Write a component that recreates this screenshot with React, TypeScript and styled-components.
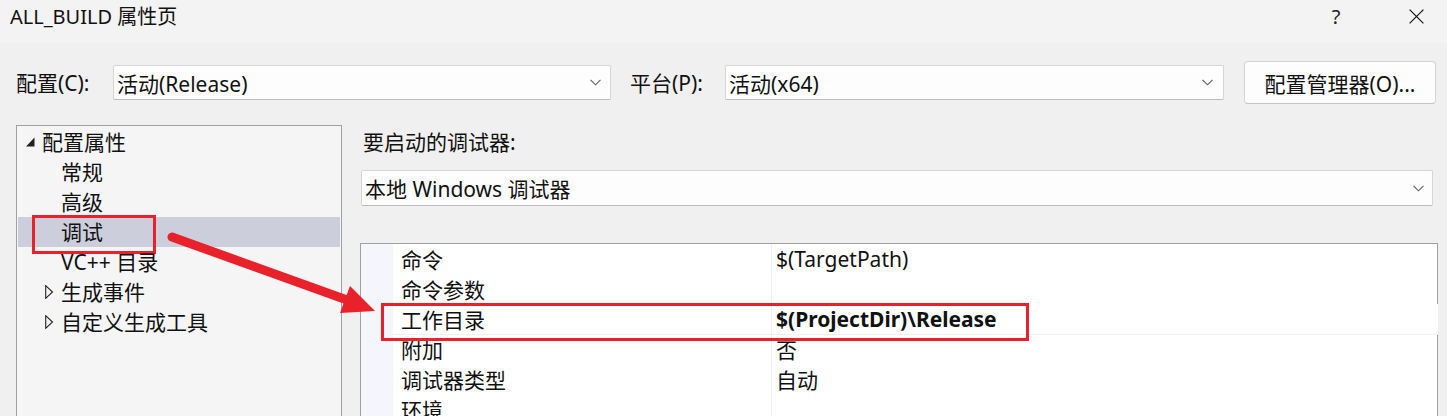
import React from "react";
import styled, { createGlobalStyle } from "styled-components";

const FONT = `"Noto Sans", "Noto Sans CJK SC", sans-serif`;
const RED = "#e8212b";

const GlobalStyle = createGlobalStyle`
  html, body { margin: 0; padding: 0; background: #f0f0f0; overflow: hidden; }
  body { font-family: ${FONT}; }
  * { box-sizing: border-box; }
`;

const Dialog = styled.div`
  position: relative;
  width: 1447px;
  height: 416px;
  overflow: hidden;
  background: #f0f0f0;
  font-family: ${FONT};
  font-size: 21px;
  color: #111;
`;

const TitleBar = styled.div`
  height: 42px;
  background: #f3f3f3;
  display: flex;
  align-items: flex-start;
  padding: 4px 23px 0 10px;
`;

const Title = styled.div`
  flex: 1;
  font-size: 20px;
  line-height: 26px;
`;

const HelpButton = styled.div`
  width: 20px;
  font-size: 20px;
  line-height: 26px;
  text-align: center;
  color: #222;
  margin-right: 63px;
`;

const CloseIcon = styled.svg`
  width: 15px;
  height: 15px;
  margin-top: 5px;
`;

const ConfigRow = styled.div`
  display: flex;
  align-items: center;
  height: 43px;
  margin-top: 19px;
  padding-left: 16px;
`;

const FieldLabel = styled.div<{ $w: number; $ml?: number }>`
  width: ${(p) => p.$w}px;
  margin-left: ${(p) => p.$ml ?? 0}px;
  line-height: 30px;
  white-space: nowrap;
`;

const Combo = styled.div<{ $w: number; $h?: number; $pr?: number }>`
  width: ${(p) => p.$w}px;
  height: ${(p) => p.$h ?? 35}px;
  background: #fdfdfd;
  border: 1px solid #d6d6d6;
  border-bottom-color: #bdbdbd;
  border-radius: 2px;
  display: flex;
  align-items: center;
  justify-content: space-between;
  padding: 0 ${(p) => p.$pr ?? 9}px 0 3px;
  white-space: nowrap;
`;

const Chevron = styled.svg`
  width: 11px;
  height: 7px;
  flex: none;
`;

const Button = styled.div`
  width: 192px;
  height: 43px;
  margin-left: 20px;
  background: #fdfdfd;
  border: 1px solid #d3d3d3;
  border-bottom-color: #c4c4c4;
  border-radius: 4px;
  display: flex;
  align-items: center;
  justify-content: center;
  white-space: nowrap;
`;

const Main = styled.div`
  display: flex;
  align-items: flex-start;
  margin-top: 21px;
  padding-left: 16px;
`;

const TreePanel = styled.div`
  width: 326px;
  height: 320px;
  flex: none;
  background: #f5f5f5;
  border: 1px solid #a0a0a0;
  padding: 1px 1px;
`;

const TreeRow = styled.div<{ $level: number; $selected?: boolean; $marked?: boolean }>`
  position: relative;
  height: 30px;
  display: flex;
  align-items: center;
  padding-left: ${(p) => 8 + p.$level * 19}px;
  background: ${(p) => (p.$selected ? "#cccedb" : "transparent")};
  white-space: nowrap;
  line-height: 28px;

  &::after {
    content: "";
    display: ${(p) => (p.$marked ? "block" : "none")};
    position: absolute;
    left: 14px;
    top: -2px;
    width: 118px;
    height: 33px;
    border: 3px solid ${RED};
  }
`;

const Expander = styled.span`
  width: 16px;
  height: 30px;
  flex: none;
  display: flex;
  align-items: center;
`;

const RightPane = styled.div`
  flex: 1;
  margin-left: 18px;
  padding-right: 9px;
`;

const SectionLabel = styled.div`
  line-height: 30px;
  margin-top: 2px;
  padding-left: 3px;
`;

const DebuggerCombo = styled(Combo)`
  margin: 13px 5px 0 1px;
  width: auto;
`;

const PropGrid = styled.div`
  margin-top: 37px;
  background: #fff;
  border: 1px solid #a0a0a0;
  border-bottom: none;
  height: 200px;
`;

const GridRow = styled.div<{ $marked?: boolean }>`
  position: relative;
  z-index: ${(p) => (p.$marked ? 1 : 0)};
  display: grid;
  grid-template-columns: 32px 379px 1fr;
  height: 30px;
  background: #fff;
  margin-right: ${(p) => (p.$marked ? -1 : 0)}px;

  &::after {
    content: "";
    display: ${(p) => (p.$marked ? "block" : "none")};
    position: absolute;
    left: 20px;
    top: -1px;
    width: 642px;
    height: 32px;
    border: 3px solid ${RED};
  }
`;

const Gutter = styled.div`
  background: #f4f6fb;
`;

const Cell = styled.div<{ $pl: number; $bold?: boolean; $divider?: boolean }>`
  display: flex;
  align-items: center;
  padding-left: ${(p) => p.$pl}px;
  border-bottom: 1px solid #eef0f6;
  border-right: ${(p) => (p.$divider ? "1px solid #eef0f6" : "none")};
  font-weight: ${(p) => (p.$bold ? 700 : 400)};
  white-space: nowrap;
`;

const ArrowLayer = styled.svg`
  position: absolute;
  left: 0;
  top: 0;
  width: 1447px;
  height: 416px;
  pointer-events: none;
  z-index: 2;
`;

const ChevronDown = () => (
  <Chevron viewBox="0 0 11 7">
    <polyline points="0.5,0.8 5.5,5.8 10.5,0.8" fill="none" stroke="#5f5f5f" strokeWidth="1.1" />
  </Chevron>
);

type TreeItem = { label: string; level: number; expander?: "open" | "closed"; selected?: boolean; marked?: boolean };

const tree: TreeItem[] = [
  { label: "配置属性", level: 0, expander: "open" },
  { label: "常规", level: 1 },
  { label: "高级", level: 1 },
  { label: "调试", level: 1, selected: true, marked: true },
  { label: "VC++ 目录", level: 1 },
  { label: "生成事件", level: 1, expander: "closed" },
  { label: "自定义生成工具", level: 1, expander: "closed" },
];

type Prop = { name: string; value: string; bold?: boolean; marked?: boolean };

const props: Prop[] = [
  { name: "命令", value: "$(TargetPath)" },
  { name: "命令参数", value: "" },
  { name: "工作目录", value: "$(ProjectDir)\\Release", bold: true, marked: true },
  { name: "附加", value: "否" },
  { name: "调试器类型", value: "自动" },
  { name: "环境", value: "" },
];

const ExpanderIcon = ({ kind }: { kind?: "open" | "closed" }) => {
  if (kind === "open")
    return (
      <svg width="9" height="10" viewBox="0 0 9 10">
        <polygon points="8.5,0.5 8.5,9.5 0,9.5" fill="#222" />
      </svg>
    );
  if (kind === "closed")
    return (
      <svg width="9" height="14" viewBox="0 0 9 14">
        <polygon points="0.7,0.7 7.5,7 0.7,13.3" fill="none" stroke="#222" strokeWidth="1.1" />
      </svg>
    );
  return null;
};

export default function App() {
  return (
    <Dialog>
      <GlobalStyle />
      <TitleBar>
        <Title>ALL_BUILD 属性页</Title>
        <HelpButton>?</HelpButton>
        <CloseIcon viewBox="0 0 15 15">
          <path d="M0.6 0.6 L14.4 14.4 M14.4 0.6 L0.6 14.4" stroke="#1a1a1a" strokeWidth="1.3" fill="none" />
        </CloseIcon>
      </TitleBar>

      <ConfigRow>
        <FieldLabel $w={97}>配置(C):</FieldLabel>
        <Combo $w={498} $pr={9}>
          <span>活动(Release)</span>
          <ChevronDown />
        </Combo>
        <FieldLabel $w={95} $ml={19}>平台(P):</FieldLabel>
        <Combo $w={499} $pr={10}>
          <span>活动(x64)</span>
          <ChevronDown />
        </Combo>
        <Button>配置管理器(O)...</Button>
      </ConfigRow>

      <Main>
        <TreePanel>
          {tree.map((t) => (
            <TreeRow key={t.label} $level={t.level} $selected={t.selected} $marked={t.marked}>
              <Expander>
                <ExpanderIcon kind={t.expander} />
              </Expander>
              {t.label}
            </TreeRow>
          ))}
        </TreePanel>

        <RightPane>
          <SectionLabel>要启动的调试器:</SectionLabel>
          <DebuggerCombo $w={0} $h={36} $pr={8}>
            <span>本地 Windows 调试器</span>
            <ChevronDown />
          </DebuggerCombo>
          <PropGrid>
            {props.map((p) => (
              <GridRow key={p.name} $marked={p.marked}>
                <Gutter />
                <Cell $pl={8} $divider>
                  {p.name}
                </Cell>
                <Cell $pl={4} $bold={p.bold}>
                  {p.value}
                </Cell>
              </GridRow>
            ))}
          </PropGrid>
        </RightPane>
      </Main>

      <ArrowLayer viewBox="0 0 1447 416">
        <line x1="172" y1="237" x2="347" y2="300" stroke={RED} strokeWidth="9" strokeLinecap="round" />
        <polygon points="350,286 340,313 375,311" fill={RED} />
      </ArrowLayer>
    </Dialog>
  );
}
